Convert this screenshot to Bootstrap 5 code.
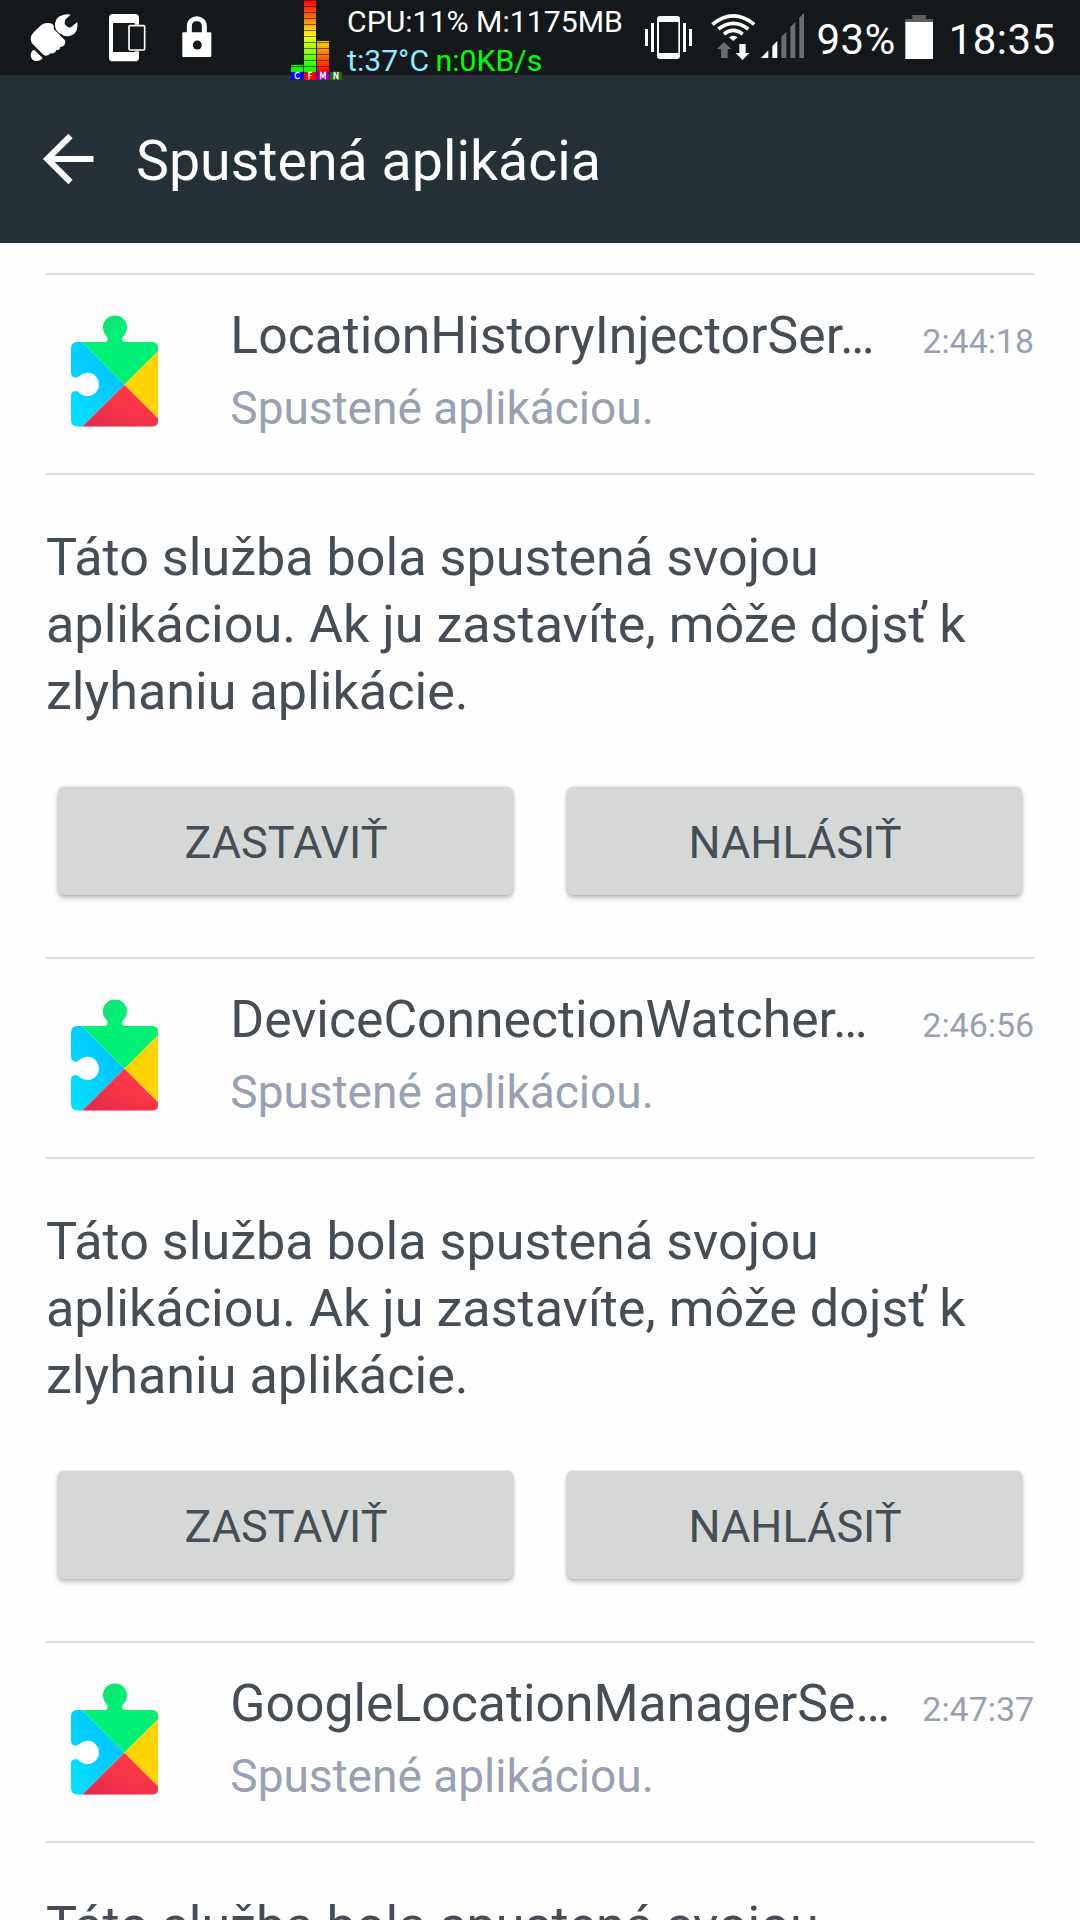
<!DOCTYPE html>
<html lang="sk">
<head>
<meta charset="utf-8">
<meta name="viewport" content="width=device-width, initial-scale=1">
<title>Spustená aplikácia</title>
<link href="https://cdn.jsdelivr.net/npm/bootstrap@5.3.0/dist/css/bootstrap.min.css" rel="stylesheet">
<style>
html,body{height:1920px;overflow:hidden}
body{font-family:Roboto,"Noto Sans",sans-serif;background:#fefefe;color:#464d55}
.statusbar{height:75px;background:#14181b;color:#fff;position:relative;z-index:2}
.statusbar svg{display:block;flex:none;height:75px}
.statusbar .meter{height:80px}
.sysinfo{width:298px;margin-left:5px;padding-top:2px;font-size:30.2px;line-height:39px;white-space:nowrap}
.sysinfo .temp{color:#8fe9ff}
.sysinfo .net{color:#0f0;margin-left:-1px}
.bignum{font-size:42px;line-height:75px;padding-top:2px;letter-spacing:.4px;white-space:nowrap;flex:none}
.appbar{height:168px;background:#263037;color:#fff}
.appbar svg{margin-left:42px}
.appbar h1{font-size:55.5px;line-height:60px;margin:6px 0 0 42px}
.services{margin:30px 46px 0;height:1647px;overflow:hidden}
.service-head{height:202px;border-top:2px solid #dcdddd;border-bottom:2px solid #dcdddd}
.service-head svg{margin:40px 72px 0 25px;flex:none}
.svc-label{padding-top:26px}
.svc-title{font-size:51.7px;line-height:70px;white-space:nowrap}
.svc-sub{font-size:46px;line-height:74px;color:#98a0b1}
.svc-time{font-size:33.9px;color:#98a0b1}
.svc-text{font-size:52.15px;line-height:67px;margin:49px 0 62px;white-space:nowrap}
.svc-actions{gap:54px;padding:0 12px;margin-bottom:62px}
.svc-actions .btn{flex:1;height:108px;padding:3px 0 0 1px;border:0;border-radius:6px;background:#d6d8d7;color:#464d55;font-size:45px;box-shadow:0 3px 5px rgba(0,0,0,.26),0 0 3px rgba(0,0,0,.14)}
</style>
</head>
<body>
<svg width="0" height="0" class="position-absolute" aria-hidden="true">
  <defs>
    <linearGradient id="blue" x1="1" y1="0" x2="0" y2="1"><stop offset="0" stop-color="#00b8ff"/><stop offset="1" stop-color="#00e5ff"/></linearGradient>
    <linearGradient id="red" x1="1" y1="0" x2="0" y2="1"><stop offset=".3" stop-color="#ff3a44"/><stop offset="1" stop-color="#e0294f"/></linearGradient>
    <clipPath id="piece"><path d="M113 156H196Q203 154 203 147Q203 142 198 136A36 36 0 1 1 252 136Q246 142 246 147Q247 154 255 156H335Q355 156 355 176V390Q355 410 335 410H113Q93 410 93 390V316Q94 304 106 303Q113 303 119 310A35 35 0 1 0 119 257Q113 263 106 263Q94 262 93 250V176Q93 156 113 156Z"/></clipPath>
    <symbol id="play" viewBox="93 75 262 336">
      <g clip-path="url(#piece)">
        <path fill="url(#blue)" d="M93 123L253 284L93 444Z"/>
        <path fill="#00f076" d="M93 123V70H360V178L253 284Z"/>
        <path fill="#14df75" d="M180 70H262L186 146Z" opacity=".55"/>
        <path fill="#ffd400" d="M360 178L253 284L360 390Z"/>
        <path fill="url(#red)" d="M120 417L253 284L386 417Z"/>
      </g>
    </symbol>
  </defs>
</svg>

<header class="statusbar d-flex">
  <svg style="margin-left:30px" width="48" viewBox="90 0 144 225" fill="#fff">
    <path d="M92 118Q92 106 101 97L124 75Q132 68 145 69Q158 69 161 77L162 88L195 121Q198 128 194 134Q189 141 181 140Q181 150 169 150Q165 162 151 160Q146 168 136 167L130 164L98 132Q92 126 92 118Z"/>
    <path d="M102 149L128 174Q122 183 109 183Q92 182 92 165Q93 153 102 149Z"/>
    <path d="M212 44Q196 40 179 49Q163 59 165 79Q167 92 178 100Q190 109 206 109Q222 107 230 91Q234 79 232 66L213 82Q202 84 194 72Q193 64 197 58Z"/>
  </svg>
  <svg style="margin-left:30px" width="38" viewBox="324 0 114 225">
    <path fill="#fff" fill-rule="evenodd" d="M338 42H406Q417 43 417 54V173Q417 184 406 184H338Q327 184 327 173V54Q327 43 338 42ZM339 69V156H404V69Z"/>
    <rect x="383" y="74" width="54" height="80" rx="6" fill="#14181b"/>
    <rect x="387" y="77" width="47" height="73" rx="3" fill="#14181b" stroke="#fff" stroke-width="5"/>
  </svg>
  <svg style="margin-left:35px" width="32" viewBox="543 0 96 225">
    <path d="M568 102V79C568 49 613 49 613 79V102" fill="none" stroke="#fff" stroke-width="15"/>
    <rect x="547" y="97" width="87" height="74" rx="3" fill="#fff"/>
    <circle cx="592" cy="135" r="13.5" fill="#14181b"/>
  </svg>
  <svg class="meter" style="margin-left:78px" width="51" viewBox="33 0 153 240">
    <defs>
      <linearGradient id="full" x1="0" y1="0" x2="0" y2="1"><stop offset="0" stop-color="#f00"/><stop offset=".2" stop-color="#ff5a00"/><stop offset=".5" stop-color="#ff0"/><stop offset="1" stop-color="#0f0"/></linearGradient>
      <linearGradient id="mem" x1="0" y1="0" x2="0" y2="1"><stop offset="0" stop-color="#ffd000"/><stop offset="1" stop-color="#f00"/></linearGradient>
    </defs>
    <rect x="33" y="195" width="36" height="21" fill="#0f0"/>
    <rect x="72" y="0" width="36" height="216" fill="url(#full)"/>
    <rect x="111" y="123" width="36" height="93" fill="url(#mem)"/>
    <path d="M33 199.500H69M72 1.500H108M72 19.500H108M72 37.500H108M72 55.500H108M72 73.500H108M72 91.500H108M72 109.500H108M72 127.500H147M72 145.500H147M72 163.500H147M72 181.500H147M72 199.500H147" stroke="#14181b" stroke-opacity=".6" stroke-width="3"/>
    <rect x="33" y="216" width="37" height="24" fill="#00f"/>
    <rect x="72" y="216" width="37" height="24" fill="#f00"/>
    <rect x="111" y="216" width="37" height="24" fill="#8e00b8"/>
    <rect x="150" y="216" width="36" height="24" fill="#206b00"/>
    <g fill="#fff" stroke="#fff" stroke-width="1" font-family="DejaVu Sans, sans-serif" font-size="24" text-anchor="middle"><text x="51" y="237">C</text><text x="90" y="237">F</text><text x="129" y="237">M</text><text x="168" y="237">N</text></g>
  </svg>
  <div class="sysinfo"><div>CPU:11% M:1175MB</div><div><span class="temp">t:37°C</span> <span class="net">n:0KB/s</span></div></div>
  <svg width="47" viewBox="45 0 141 225" fill="#fff">
    <path d="M45 87h9v51h-9zM63 69h9v87h-9zM159 69h9v87h-9zM177 87h9v51h-9z"/>
    <path fill-rule="evenodd" d="M90 48H141Q150 48 150 57V168Q150 177 141 177H90Q81 177 81 168V57Q81 48 90 48ZM87 66V159H145V66Z"/>
  </svg>
  <svg style="margin-left:18.700px" width="44.670" viewBox="242 0 134 225">
    <g fill="none" stroke="#fff" stroke-width="10.500"><path d="M246 73Q309 22 372 73"/><path d="M264 87Q309 53 354 87"/><path d="M281 102Q309 80 337 102"/></g>
    <path fill="#fff" d="M296 112Q309 103 322 112L309 123Z"/>
    <path fill="#6b6c6e" d="M281 126L303 147H292V174H272V147H260Z"/>
    <path fill="#fff" d="M327 132H346V159H357L337 180L316 159H327Z"/>
  </svg>
  <svg style="margin-left:5.300px" width="43.670" viewBox="392 0 131 225">
    <path fill="#fff" d="M392 174L414 151V174ZM426 138L441 123V174H426Z"/>
    <path fill="#6b6c6e" d="M453 110L468 95V174H453ZM480 81L495 66V174H480ZM507 53L522 38V174H507Z"/>
  </svg>
  <div class="bignum" style="margin-left:12.300px;width:88px">93%</div>
  <svg width="28.670" viewBox="824 0 86 225">
    <path fill="#5c5d5f" d="M846 45H887V57H909V68H825V57H846Z"/><rect x="825" y="66" width="84" height="111" fill="#fff"/>
  </svg>
  <div class="bignum" style="margin-left:15.600px">18:35</div>
</header>

<nav class="appbar d-flex align-items-center">
  <svg width="52" height="52" viewBox="0 0 52 52" fill="none" stroke="#fff" stroke-width="6"><path d="M28.500 3L5.200 26L28.500 49M5 26H51.500"/></svg>
  <h1 class="fw-normal">Spustená aplikácia</h1>
</nav>

<main class="services">
  <section>
    <div class="service-head d-flex">
      <svg width="87.330" height="112"><use href="#play"/></svg>
      <div class="svc-label flex-grow-1">
        <div class="d-flex justify-content-between align-items-baseline"><div class="svc-title">LocationHistoryInjectorSer…</div><div class="svc-time">2:44:18</div></div>
        <div class="svc-sub">Spustené aplikáciou.</div>
      </div>
    </div>
    <p class="svc-text">Táto služba bola spustená svojou<br>aplikáciou. Ak ju zastavíte, môže dojsť k<br>zlyhaniu aplikácie.</p>
    <div class="svc-actions d-flex"><button class="btn">ZASTAVIŤ</button><button class="btn">NAHLÁSIŤ</button></div>
  </section>
  <section>
    <div class="service-head d-flex">
      <svg width="87.330" height="112"><use href="#play"/></svg>
      <div class="svc-label flex-grow-1">
        <div class="d-flex justify-content-between align-items-baseline"><div class="svc-title">DeviceConnectionWatcher…</div><div class="svc-time">2:46:56</div></div>
        <div class="svc-sub">Spustené aplikáciou.</div>
      </div>
    </div>
    <p class="svc-text">Táto služba bola spustená svojou<br>aplikáciou. Ak ju zastavíte, môže dojsť k<br>zlyhaniu aplikácie.</p>
    <div class="svc-actions d-flex"><button class="btn">ZASTAVIŤ</button><button class="btn">NAHLÁSIŤ</button></div>
  </section>
  <section>
    <div class="service-head d-flex">
      <svg width="87.330" height="112"><use href="#play"/></svg>
      <div class="svc-label flex-grow-1">
        <div class="d-flex justify-content-between align-items-baseline"><div class="svc-title">GoogleLocationManagerSe…</div><div class="svc-time">2:47:37</div></div>
        <div class="svc-sub">Spustené aplikáciou.</div>
      </div>
    </div>
    <p class="svc-text">Táto služba bola spustená svojou</p>
  </section>
</main>
<script src="https://cdn.jsdelivr.net/npm/bootstrap@5.3.0/dist/js/bootstrap.bundle.min.js"></script>
</body>
</html>
